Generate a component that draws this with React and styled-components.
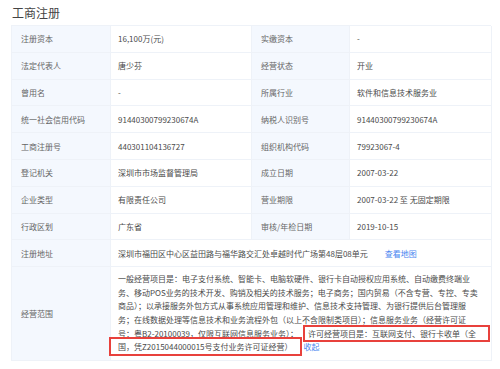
import React from "react";
import styled, { createGlobalStyle } from "styled-components";

const Global = createGlobalStyle`
  html, body { margin: 0; padding: 0; background: #fff; }
  body { font-family: "Noto Sans CJK SC", "Noto Sans", sans-serif; }
`;

const Page = styled.div`
  width: 500px;
  padding: 4px 9px 0 11px;
  box-sizing: border-box;
`;

const Title = styled.h2`
  margin: 0 0 0 1px;
  font-size: 12px;
  line-height: 17px;
  font-weight: 400;
  color: #444;
  height: 21px;
`;

const Table = styled.div`
  display: grid;
  grid-template-columns: 99px 141px 98px 142px;
  grid-template-rows: repeat(9, 26.8px) 94px;
  border-top: 1px solid #eef2f8;
  border-left: 1px solid #eef2f8;
  font-size: 8px;
`;

const Cell = styled.div`
  box-sizing: border-box;
  border-right: 1px solid #eef2f8;
  border-bottom: 1px solid #eef2f8;
  display: flex;
  align-items: center;
  white-space: nowrap;
  padding-left: ${(p) => (p.$label ? "9px" : "7px")};
  background: ${(p) => (p.$label ? "#f4f8fe" : "#fff")};
  color: ${(p) => (p.$label ? "#666" : "#4a4a4a")};
  grid-column: ${(p) => p.$span || "auto"};
`;

const Link = styled.span`
  color: #4a86f0;
  margin-left: ${(p) => p.$gap || "0"};
`;

const ScopeText = styled.div`
  grid-column: 2 / -1;
  box-sizing: border-box;
  border-right: 1px solid #eef2f8;
  border-bottom: 1px solid #eef2f8;
  padding: 5px 0 0 7px;
  color: #4a4a4a;
  font-size: 8px;
  line-height: 13.6px;
`;

const Line = styled.div`
  white-space: nowrap;
`;

const Mark = styled.span`
  border: 2px solid #e8413c;
  padding: ${(p) => p.$pad};
  margin-left: ${(p) => p.$ml || "0"};
`;

const rows = [
  ["注册资本", "16,100万(元)", "实缴资本", "-"],
  ["法定代表人", "唐少芬", "经营状态", "开业"],
  ["曾用名", "-", "所属行业", "软件和信息技术服务业"],
  ["统一社会信用代码", "91440300799230674A", "纳税人识别号", "91440300799230674A"],
  ["工商注册号", "440301104136727", "组织机构代码", "79923067-4"],
  ["登记机关", "深圳市市场监督管理局", "成立日期", "2007-03-22"],
  ["企业类型", "有限责任公司", "营业期限", "2007-03-22 至 无固定期限"],
  ["行政区划", "广东省", "审核/年检日期", "2019-10-15"],
];

export default function App() {
  return (
    <Page>
      <Global />
      <Title>工商注册</Title>
      <Table>
        {rows.map((r, i) => (
          <React.Fragment key={i}>
            <Cell $label>{r[0]}</Cell>
            <Cell>{r[1]}</Cell>
            <Cell $label>{r[2]}</Cell>
            <Cell>{r[3]}</Cell>
          </React.Fragment>
        ))}
        <Cell $label>注册地址</Cell>
        <Cell $span="2 / -1">
          深圳市福田区中心区益田路与福华路交汇处卓越时代广场第48层08单元
          <Link $gap="17px">查看地图</Link>
        </Cell>
        <Cell $label>经营范围</Cell>
        <ScopeText>
          <Line>一般经营项目是：电子支付系统、智能卡、电脑软硬件、银行卡自动授权应用系统、自动缴费终端业</Line>
          <Line>务、移动POS业务的技术开发、购销及相关的技术服务；电子商务；国内贸易（不含专营、专控、专卖</Line>
          <Line>商品）；以承接服务外包方式从事系统应用管理和维护、信息技术支持管理、为银行提供后台管理服</Line>
          <Line>务；在线数据处理等信息技术和业务流程外包（以上不含限制类项目）；信息服务业务（经营许可证</Line>
          <Line>号：粤B2-20100039，仅限互联网信息服务业务）；<Mark $pad="1px 12px 1px 3px" $ml="5px">许可经营项目是：互联网支付、银行卡收单（全</Mark></Line>
          <Line><Mark $pad="2px 7px 2px 7px" $ml="-9px">国，凭Z2015044000015号支付业务许可证经营）</Mark><Link $gap="2px">收起</Link></Line>
        </ScopeText>
      </Table>
    </Page>
  );
}
